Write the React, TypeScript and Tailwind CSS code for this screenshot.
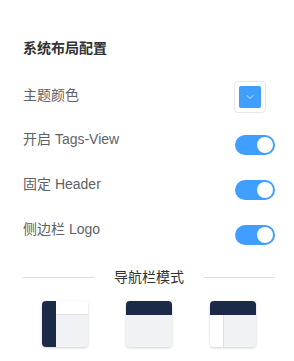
import { ChevronDown } from 'lucide-react';

function Toggle() {
  return (
    <div className="mt-[6px] flex h-[20px] w-[40px] items-center justify-end rounded-full bg-[#409eff] px-[2px]">
      <div className="h-[16px] w-[16px] rounded-full bg-white" />
    </div>
  );
}

function Row({ label, children }: { label: string; children: React.ReactNode }) {
  return (
    <div className="flex items-start justify-between">
      <span className="text-[14px] leading-[20px] text-[#606266]">{label}</span>
      {children}
    </div>
  );
}

function LayoutThumb({ mode }: { mode: 'left' | 'top' | 'mix' }) {
  return (
    <div className="flex justify-center">
      <div className="h-[46px] w-[46px] overflow-hidden rounded-[4px] bg-[#f0f2f5] shadow-[0_1px_3px_rgba(0,0,0,0.18)]">
        {mode === 'left' && (
          <div className="flex h-full">
            <div className="w-[14px] bg-[#1b2a47]" />
            <div className="flex flex-1 flex-col">
              <div className="h-[14px] border-b border-[#dcdfe6] bg-white" />
              <div className="flex-1 bg-[#f0f2f5]" />
            </div>
          </div>
        )}
        {mode === 'top' && (
          <div className="flex h-full flex-col">
            <div className="h-[14px] bg-[#1b2a47]" />
            <div className="flex-1 bg-[#f0f2f5]" />
          </div>
        )}
        {mode === 'mix' && (
          <div className="flex h-full flex-col">
            <div className="h-[14px] bg-[#1b2a47]" />
            <div className="flex flex-1">
              <div className="w-[14px] border-r border-[#dcdfe6] bg-white" />
              <div className="flex-1 bg-[#f0f2f5]" />
            </div>
          </div>
        )}
      </div>
    </div>
  );
}

export default function App() {
  return (
    <div
      className="h-[361px] w-[294px] bg-white pl-[23px] pr-[19px] pt-[38px]"
      style={{ fontFamily: '"Liberation Sans", "Noto Sans CJK SC", sans-serif' }}
    >
      <h3 className="text-[14px] font-bold leading-[20px] text-[#303133]">系统布局配置</h3>

      <div className="mt-[23px] flex items-start justify-between">
        <span className="mt-[4px] text-[14px] leading-[20px] text-[#606266]">主题颜色</span>
        <div className="mr-[9px] flex h-[32px] w-[32px] items-center justify-center rounded-[4px] border border-[#e4e7ed] bg-white">
          <div className="flex h-[22px] w-[22px] items-center justify-center rounded-[2px] bg-[#409eff]">
            <ChevronDown className="h-[12px] w-[12px] text-white" strokeWidth={1.5} />
          </div>
        </div>
      </div>

      <div className="mt-[16px] flex flex-col gap-[19px]">
        <Row label="开启 Tags-View">
          <Toggle />
        </Row>
        <Row label="固定 Header">
          <Toggle />
        </Row>
        <Row label="侧边栏 Logo">
          <Toggle />
        </Row>
      </div>

      <div className="mt-[22px] flex items-center">
        <div className="h-px flex-1 bg-[#dcdfe6]" />
        <span className="mx-[20px] text-[14px] leading-[20px] text-[#303133]">导航栏模式</span>
        <div className="h-px flex-1 bg-[#dcdfe6]" />
      </div>

      <div className="mt-[14px] grid grid-cols-3">
        <LayoutThumb mode="left" />
        <LayoutThumb mode="top" />
        <LayoutThumb mode="mix" />
      </div>
    </div>
  );
}
